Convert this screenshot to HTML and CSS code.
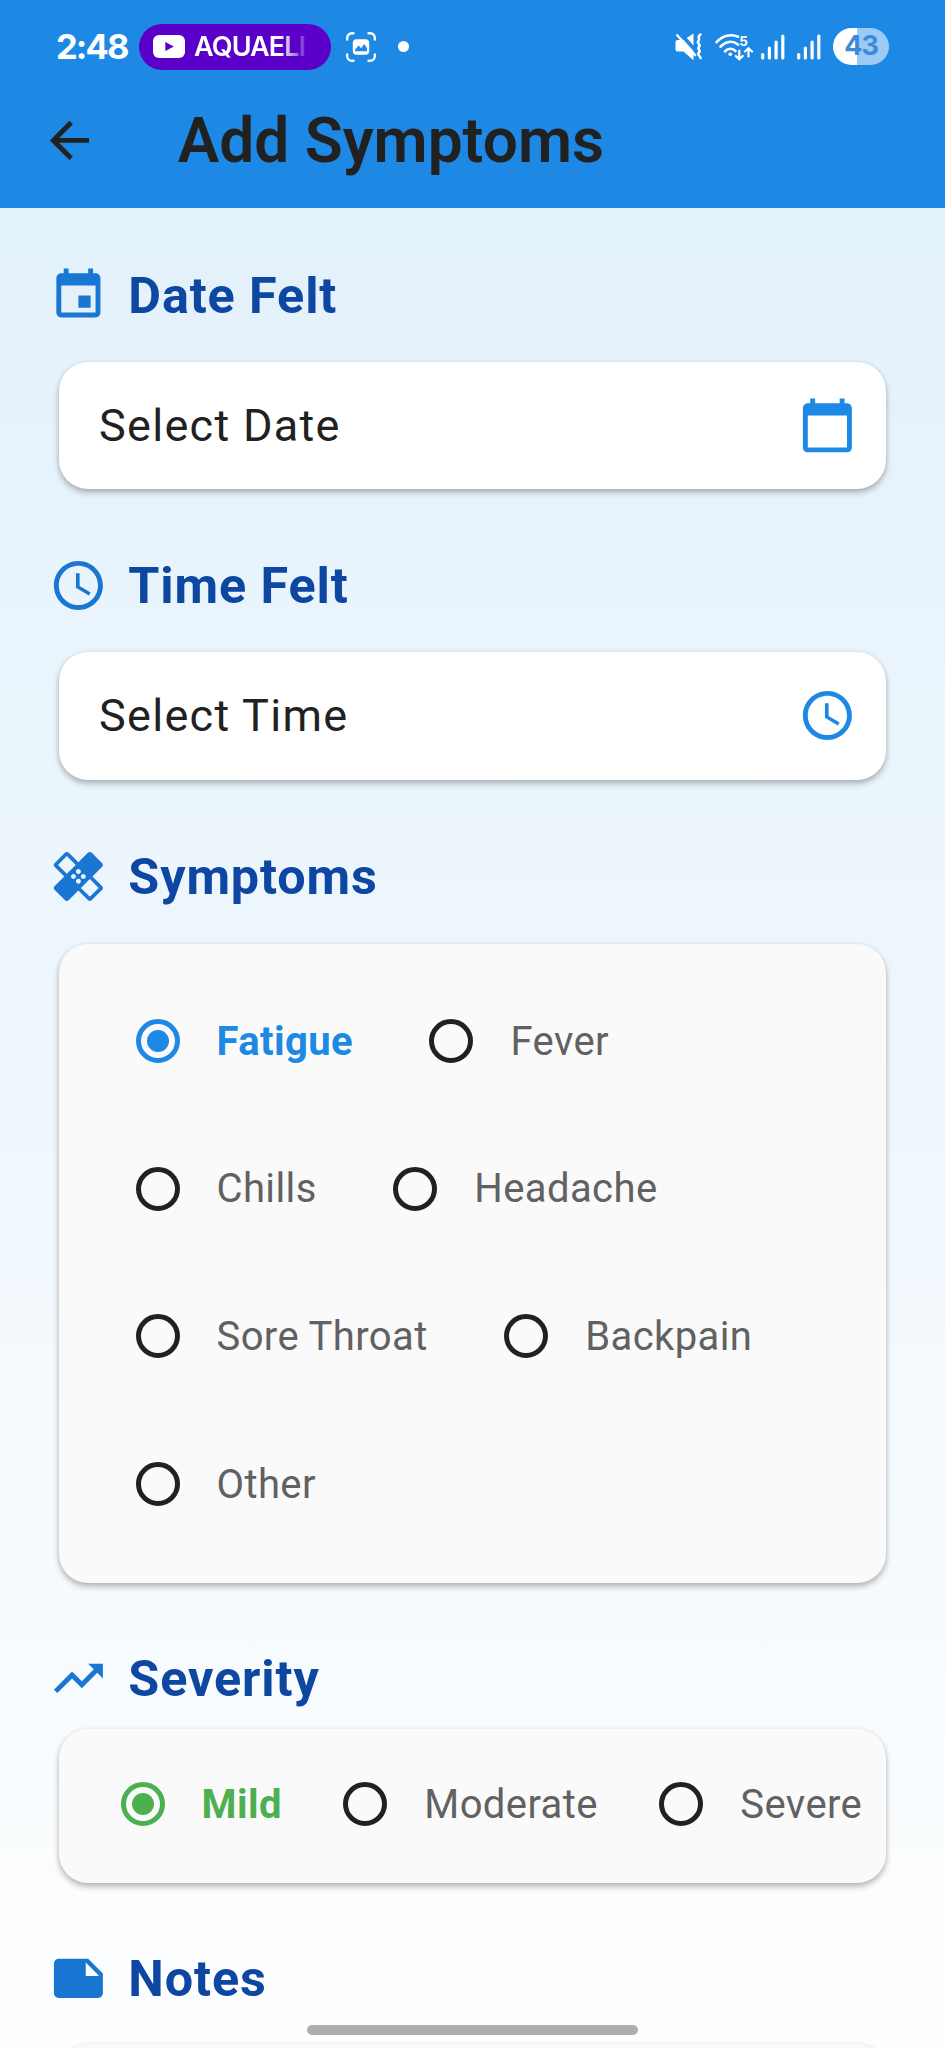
FILE: index.html
```html
<!DOCTYPE html>
<html lang="en">
<head>
<meta charset="utf-8">
<meta name="viewport" content="width=device-width, initial-scale=1">
<title>Add Symptoms</title>
<link rel="stylesheet" href="styles.css">
</head>
<body>
<div class="screen">
  <header class="top">
    <div class="status">
      <div class="status-left">
        <span class="clock">2:48</span>
        <span class="media-pill">
          <svg class="media-icon" viewBox="0 0 32 23"><rect width="32" height="23" rx="6" fill="#fff"/><path d="M12.3 7l8.6 4.5-8.6 4.5z" fill="#5a00c8"/></svg>
          <span class="media-title">AQUAELI</span>
        </span>
        <svg class="capture" viewBox="0 0 32 32"><g fill="none" stroke="#fff" stroke-width="2.4" stroke-linecap="round"><path d="M2.2 8.5V6.8a4.6 4.6 0 0 1 4.6-4.6h1.7M23.5 2.2h1.7a4.6 4.6 0 0 1 4.6 4.6v1.7M29.8 23.5v1.7a4.6 4.6 0 0 1-4.6 4.6h-1.7M8.5 29.8H6.8a4.6 4.6 0 0 1-4.6-4.6v-1.7"/></g><rect x="7.8" y="8.3" width="16.4" height="15.4" rx="3.6" fill="#fff"/><path d="M10 20.3v-1.6l3.6-4.1 2.6 2.6 2.9-4.3 2.9 4v3.4z" fill="#1e88e5"/></svg>
        <span class="dot"></span>
      </div>
      <div class="status-right">
        <svg class="mute" viewBox="674 32 30 30"><path d="M677.5 40h6l10-6.6v26.8L683.5 51.500h-6a2 2 0 0 1-2-2V42a2 2 0 0 1 2-2z" fill="#fff"/><path d="M679.800 33l17.500 19.500" stroke="#1e88e5" stroke-width="3.800"/><path d="M677.200 35.200l18 20" stroke="#fff" stroke-width="2.400" stroke-linecap="round"/><path d="M700.500 34.500c-4.500 3 .5 4-2 6.300s3 3.500.5 6 2.500 3.500 0 5.700 1.500 3.300 1.500 5.500" fill="none" stroke="#fff" stroke-width="2.500" stroke-linecap="round"/></svg>
        <svg class="wifi" viewBox="714 32 42 30"><g fill="none" stroke="#fff" stroke-width="2.600" stroke-linecap="round"><path d="M716.500 42.200c6-7 14.500-8.500 21.500-5.500"/><path d="M720.500 46.700c5-5.500 12-6.500 17.500-2.200"/><path d="M725 51.300c3-3.300 8-3.300 10.500-.3"/><path d="M739.300 50.500v8M735.800 56l3.500 3.300 3.500-3.300M748.500 56.500v-7M745 51.500l3.500-3.300 3.500 3.300" stroke-width="2.200"/></g><circle cx="730.300" cy="54.300" r="1.800" fill="#fff"/><text class="band" x="739.300" y="45.500">5</text></svg>
        <svg class="signal first" viewBox="0 0 26 28"><path d="M2.700 21.500v3.500M9.400 15v10M16.100 9v16M22.800 3v22" stroke="#fff" stroke-width="3.200" stroke-linecap="round"/></svg>
        <svg class="signal" viewBox="0 0 26 28"><path d="M2.700 21.500v3.500M9.400 15v10M16.100 9v16M22.800 3v22" stroke="#fff" stroke-width="3.200" stroke-linecap="round"/></svg>
        <span class="battery">43</span>
      </div>
    </div>
    <div class="appbar">
      <svg class="icon back" viewBox="0 0 24 24"><path d="M20 11H7.830l5.590-5.590L12 4l-8 8 8 8 1.410-1.410L7.830 13H20z"/></svg>
      <h1 class="title">Add Symptoms</h1>
    </div>
  </header>

  <main class="content">
    <section class="section date">
      <h2 class="heading"><svg class="icon" viewBox="0 0 24 24"><path d="M17 12h-5v5h5v-5zM16 1v2H8V1H6v2H5c-1.110 0-1.990.9-1.990 2L3 19c0 1.100.890 2 2 2h14c1.100 0 2-.9 2-2V5c0-1.100-.9-2-2-2h-1V1h-2zm3 18H5V8h14v11z"/></svg>Date Felt</h2>
      <div class="card field"><span>Select Date</span><svg class="icon" viewBox="0 0 24 24"><path d="M20 3h-1V1h-2v2H7V1H5v2H4c-1.100 0-2 .9-2 2v16c0 1.100.9 2 2 2h16c1.100 0 2-.9 2-2V5c0-1.100-.9-2-2-2zm0 18H4V8h16v13z"/></svg></div>
    </section>

    <section class="section time">
      <h2 class="heading"><svg class="icon" viewBox="0 0 24 24"><path d="M11.990 2C6.470 2 2 6.480 2 12s4.470 10 9.990 10C17.520 22 22 17.520 22 12S17.520 2 11.990 2zM12 20c-4.420 0-8-3.580-8-8s3.580-8 8-8 8 3.580 8 8-3.580 8-8 8zm.5-13H11v6l5.250 3.150.75-1.230-4.500-2.670z"/></svg>Time Felt</h2>
      <div class="card field"><span>Select Time</span><svg class="icon" viewBox="0 0 24 24"><path d="M11.990 2C6.470 2 2 6.480 2 12s4.470 10 9.990 10C17.520 22 22 17.520 22 12S17.520 2 11.990 2zM12 20c-4.420 0-8-3.580-8-8s3.580-8 8-8 8 3.580 8 8-3.580 8-8 8zm.5-13H11v6l5.250 3.150.75-1.230-4.500-2.670z"/></svg></div>
    </section>

    <section class="section symptoms">
      <h2 class="heading"><svg class="icon" viewBox="0 0 24 24"><path d="M17.730 12.020l3.980-3.980c.39-.39.39-1.020 0-1.410l-4.340-4.340c-.39-.39-1.020-.39-1.410 0l-3.980 3.980L8 2.290C7.800 2.100 7.550 2 7.290 2c-.25 0-.51.1-.7.29L2.250 6.630c-.39.39-.39 1.020 0 1.410l3.980 3.980L2.250 16c-.39.39-.39 1.020 0 1.410l4.340 4.340c.39.39 1.020.39 1.410 0l3.980-3.980 3.980 3.980c.2.2.45.29.71.29.26 0 .51-.1.71-.29l4.340-4.340c.39-.39.39-1.020 0-1.410l-3.990-3.980zM12 9c.55 0 1 .45 1 1s-.45 1-1 1-1-.45-1-1 .45-1 1-1zm-4.710 1.960L3.660 7.340l3.630-3.630 3.620 3.620-3.620 3.630zM10 13c-.55 0-1-.45-1-1s.45-1 1-1 1 .45 1 1-.45 1-1 1zm2 2c-.55 0-1-.45-1-1s.45-1 1-1 1 .45 1 1-.45 1-1 1zm2-4c.55 0 1 .45 1 1s-.45 1-1 1-1-.45-1-1 .45-1 1-1zm2.660 9.340l-3.630-3.620 3.630-3.630 3.620 3.620-3.620 3.630z"/></svg>Symptoms</h2>
      <div class="card options">
        <div class="option-row"><span class="option selected"><i class="radio"></i>Fatigue</span><span class="option"><i class="radio"></i>Fever</span></div>
        <div class="option-row"><span class="option"><i class="radio"></i>Chills</span><span class="option"><i class="radio"></i>Headache</span></div>
        <div class="option-row"><span class="option"><i class="radio"></i>Sore Throat</span><span class="option"><i class="radio"></i>Backpain</span></div>
        <div class="option-row"><span class="option"><i class="radio"></i>Other</span></div>
      </div>
    </section>

    <section class="section severity">
      <h2 class="heading"><svg class="icon" viewBox="0 0 24 24"><path d="M16 6l2.290 2.290-4.880 4.880-4-4L2 16.590 3.410 18l6-6 4 4 6.300-6.290L22 12V6z"/></svg>Severity</h2>
      <div class="card levels"><span class="option selected mild"><i class="radio"></i>Mild</span><span class="option"><i class="radio"></i>Moderate</span><span class="option"><i class="radio"></i>Severe</span></div>
    </section>

    <section class="section notes">
      <h2 class="heading"><svg class="icon" viewBox="0 0 24 24"><path d="M22 10l-6-6H4c-1.100 0-2 .9-2 2v12.010c0 1.100.9 1.990 2 1.990l16-.01c1.100 0 2-.890 2-1.990v-8zm-7-4.500l5.500 5.500H15V5.500z"/></svg>Notes</h2>
      <div class="card note-field"></div>
    </section>
  </main>
  <div class="home-bar"></div>
</div>
</body>
</html>
```
FILE: styles.css
```css
* { box-sizing: border-box; }

body {
  margin: 0;
  font-family: Roboto, "Liberation Sans", sans-serif;
  color: #212121;
}

.screen {
  position: relative;
  display: flex;
  flex-direction: column;
  width: 945px;
  height: 2048px;
  overflow: hidden;
}

/* Header: system status bar and app bar */
.top {
  flex: none;
  height: 208px;
  background: #1e88e5;
}

.status {
  display: flex;
  justify-content: space-between;
  align-items: center;
  height: 93px;
  padding: 0 56px;
  color: #fff;
  font-family: Inter, "Liberation Sans", sans-serif;
}

.status-left,
.status-right {
  display: flex;
  align-items: center;
}

.clock {
  width: 83px;
  font-size: 34.500px;
  font-weight: 700;
  letter-spacing: -1.900px;
}

.media-pill {
  display: flex;
  align-items: center;
  width: 192px;
  height: 46px;
  padding-left: 14px;
  border-radius: 23px;
  background: #5a00c8;
}

.media-icon { width: 32px; height: 23px; }

.media-title {
  width: 119px;
  margin-left: 9px;
  font-size: 27px;
  font-weight: 600;
  letter-spacing: -0.900px;
  -webkit-mask-image: linear-gradient(90deg, #000 72%, transparent 98%);
  mask-image: linear-gradient(90deg, #000 72%, transparent 98%);
}

.capture { width: 32px; height: 32px; margin-left: 14px; }

.dot {
  width: 11px;
  height: 11px;
  margin-left: 21px;
  border-radius: 50%;
  background: #fff;
}

.mute { width: 30px; height: 30px; }
.wifi { width: 42px; height: 30px; margin-left: 10px; }
.band { font: 700 13.500px Inter, sans-serif; fill: #fff; }
.signal { width: 26px; height: 28px; margin-left: 10px; }
.signal.first { margin-left: 4px; }

.battery {
  width: 56px;
  height: 37px;
  margin-left: 11px;
  border-radius: 19px;
  background: linear-gradient(90deg, #fff 43%, #9bcaf5 43%);
  color: #3a8ad8;
  font-size: 27px;
  font-weight: 700;
  line-height: 35px;
  letter-spacing: -1px;
  text-align: center;
}

.appbar {
  display: flex;
  align-items: center;
  height: 95px;
  padding-left: 40px;
}

.icon {
  flex: none;
  width: 58.800px;
  height: 58.800px;
  fill: currentColor;
}

.title {
  margin: 0 0 0 79px;
  font-size: 62.200px;
  font-weight: 600;
  line-height: 72px;
  color: #212121;
}

/* Form */
.content {
  flex: 1;
  padding: 55px 49px 0;
  background: linear-gradient(#e3f1fb, #fff 94%);
}

.heading {
  display: flex;
  align-items: center;
  height: 64px;
  margin: 0;
  color: #0d47a1;
  font-size: 50.300px;
  font-weight: 700;
  letter-spacing: 0.900px;
}

.heading .icon {
  margin: 0 20.500px 0 0;
  color: #1976d2;
}

.card {
  margin: 34.500px 10px 64.500px;
  border-radius: 29px;
  background: #fafafa;
  box-shadow: 0 1px 5px rgba(0, 0, 0, 0.12), 0 4px 6px rgba(0, 0, 0, 0.22);
}

.field {
  display: flex;
  align-items: center;
  justify-content: space-between;
  height: 127.500px;
  padding: 0 29px 0 40px;
  background: #fff;
  font-size: 45px;
  letter-spacing: 1.300px;
}

.field .icon { color: #1e88e5; }

.options {
  height: 639px;
  margin-top: 35.500px;
  margin-bottom: 63.500px;
  padding: 24px 0 0 76.500px;
}

.option-row {
  display: flex;
  gap: 76.500px;
  height: 147.600px;
}

.option {
  display: flex;
  align-items: center;
  color: #616161;
  font-size: 40px;
  letter-spacing: 0.400px;
}

.radio {
  display: grid;
  place-items: center;
  width: 44px;
  height: 44px;
  margin-right: 37px;
  border: 5px solid #212121;
  border-radius: 50%;
}

.selected { color: #1e88e5; font-weight: 700; }
.selected.mild { color: #4caf50; }
.selected .radio { border-color: currentColor; }
.selected .radio::after {
  content: "";
  width: 22px;
  height: 22px;
  border-radius: 50%;
  background: currentColor;
}

.levels {
  display: flex;
  gap: 61.500px;
  height: 154.500px;
  margin-top: 18.500px;
  margin-bottom: 63.500px;
  padding: 0 0 3px 61.500px;
}

.note-field { height: 200px; margin-top: 33px; }

/* System gesture handle, floats above the form */
.home-bar {
  position: absolute;
  bottom: 13px;
  left: 307px;
  width: 331px;
  height: 10px;
  border-radius: 5px;
  background: #adadad;
}
```
